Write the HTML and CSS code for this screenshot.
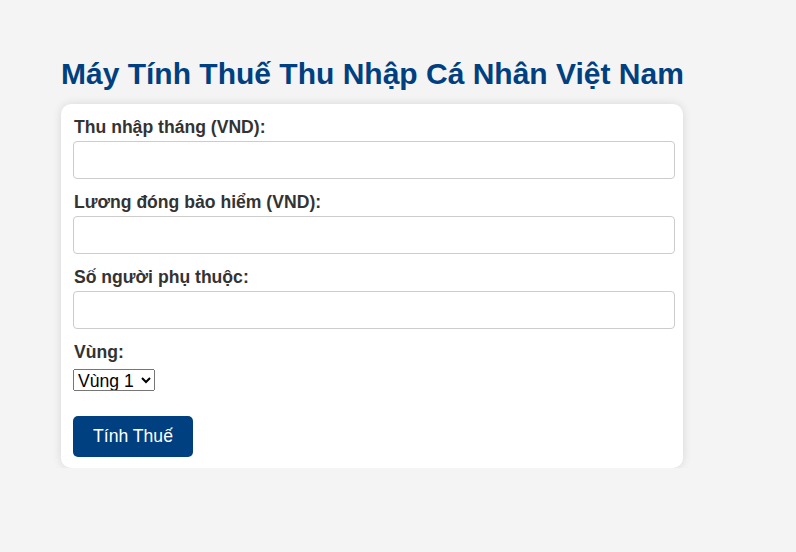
FILE: index.html
```html
<!DOCTYPE html>
<html lang="vi">
<head>
<meta charset="utf-8">
<title>Máy Tính Thuế TNCN</title>
<link rel="stylesheet" href="styles.css">
</head>
<body>
<div class="container">
  <h1 class="title">Máy Tính Thuế Thu Nhập Cá Nhân Việt Nam</h1>
  <form class="card">
    <label class="label" for="income">Thu nhập tháng (VND):</label>
    <input class="input" id="income" type="number">
    <label class="label" for="insurance">Lương đóng bảo hiểm (VND):</label>
    <input class="input" id="insurance" type="number">
    <label class="label" for="dependents">Số người phụ thuộc:</label>
    <input class="input" id="dependents" type="number">
    <label class="label" for="region">Vùng:</label>
    <select class="select" id="region">
      <option>Vùng 1</option>
      <option>Vùng 2</option>
      <option>Vùng 3</option>
      <option>Vùng 4</option>
    </select>
    <button class="button" type="button">Tính Thuế</button>
  </form>
</div>
</body>
</html>
```
FILE: styles.css
```css
html, body {
  margin: 0;
  padding: 0;
}
body {
  background: #f4f4f4;
  font-family: "Liberation Sans", Arial, sans-serif;
  color: #333;
}
.container {
  width: 622px;
  margin-left: 61px;
  padding-top: 56px;
}
.title {
  margin: 0 0 12px 0;
  font-size: 30px;
  line-height: 36px;
  font-weight: bold;
  color: #004080;
  white-space: nowrap;
}
.card {
  background: #fff;
  border-radius: 10px;
  box-shadow: 0 0 10px rgba(0, 0, 0, 0.12);
  padding: 13px 8px 11px 12px;
  display: flex;
  flex-direction: column;
  align-items: flex-start;
}
.label {
  display: block;
  font-size: 17.6px;
  line-height: 20px;
  font-weight: bold;
  color: #333;
  margin: 0 0 4px 1px;
}
.input {
  box-sizing: border-box;
  width: 602px;
  height: 38px;
  margin: 0 0 13px 0;
  border: 1px solid #ccc;
  border-radius: 4px;
  padding: 8px;
  font-size: 16px;
  font-family: "Liberation Sans", Arial, sans-serif;
  background: #fff;
}
.select {
  box-sizing: border-box;
  width: 82px;
  height: 22px;
  margin: 3px 0 25px 0;
  font-size: 17.6px;
  font-family: "Liberation Sans", Arial, sans-serif;
  color: #000;
}
.button {
  box-sizing: border-box;
  width: 120px;
  height: 41px;
  border: none;
  border-radius: 5px;
  background: #004080;
  color: #fff;
  font-size: 17.6px;
  font-family: "Liberation Sans", Arial, sans-serif;
  cursor: pointer;
}
```
